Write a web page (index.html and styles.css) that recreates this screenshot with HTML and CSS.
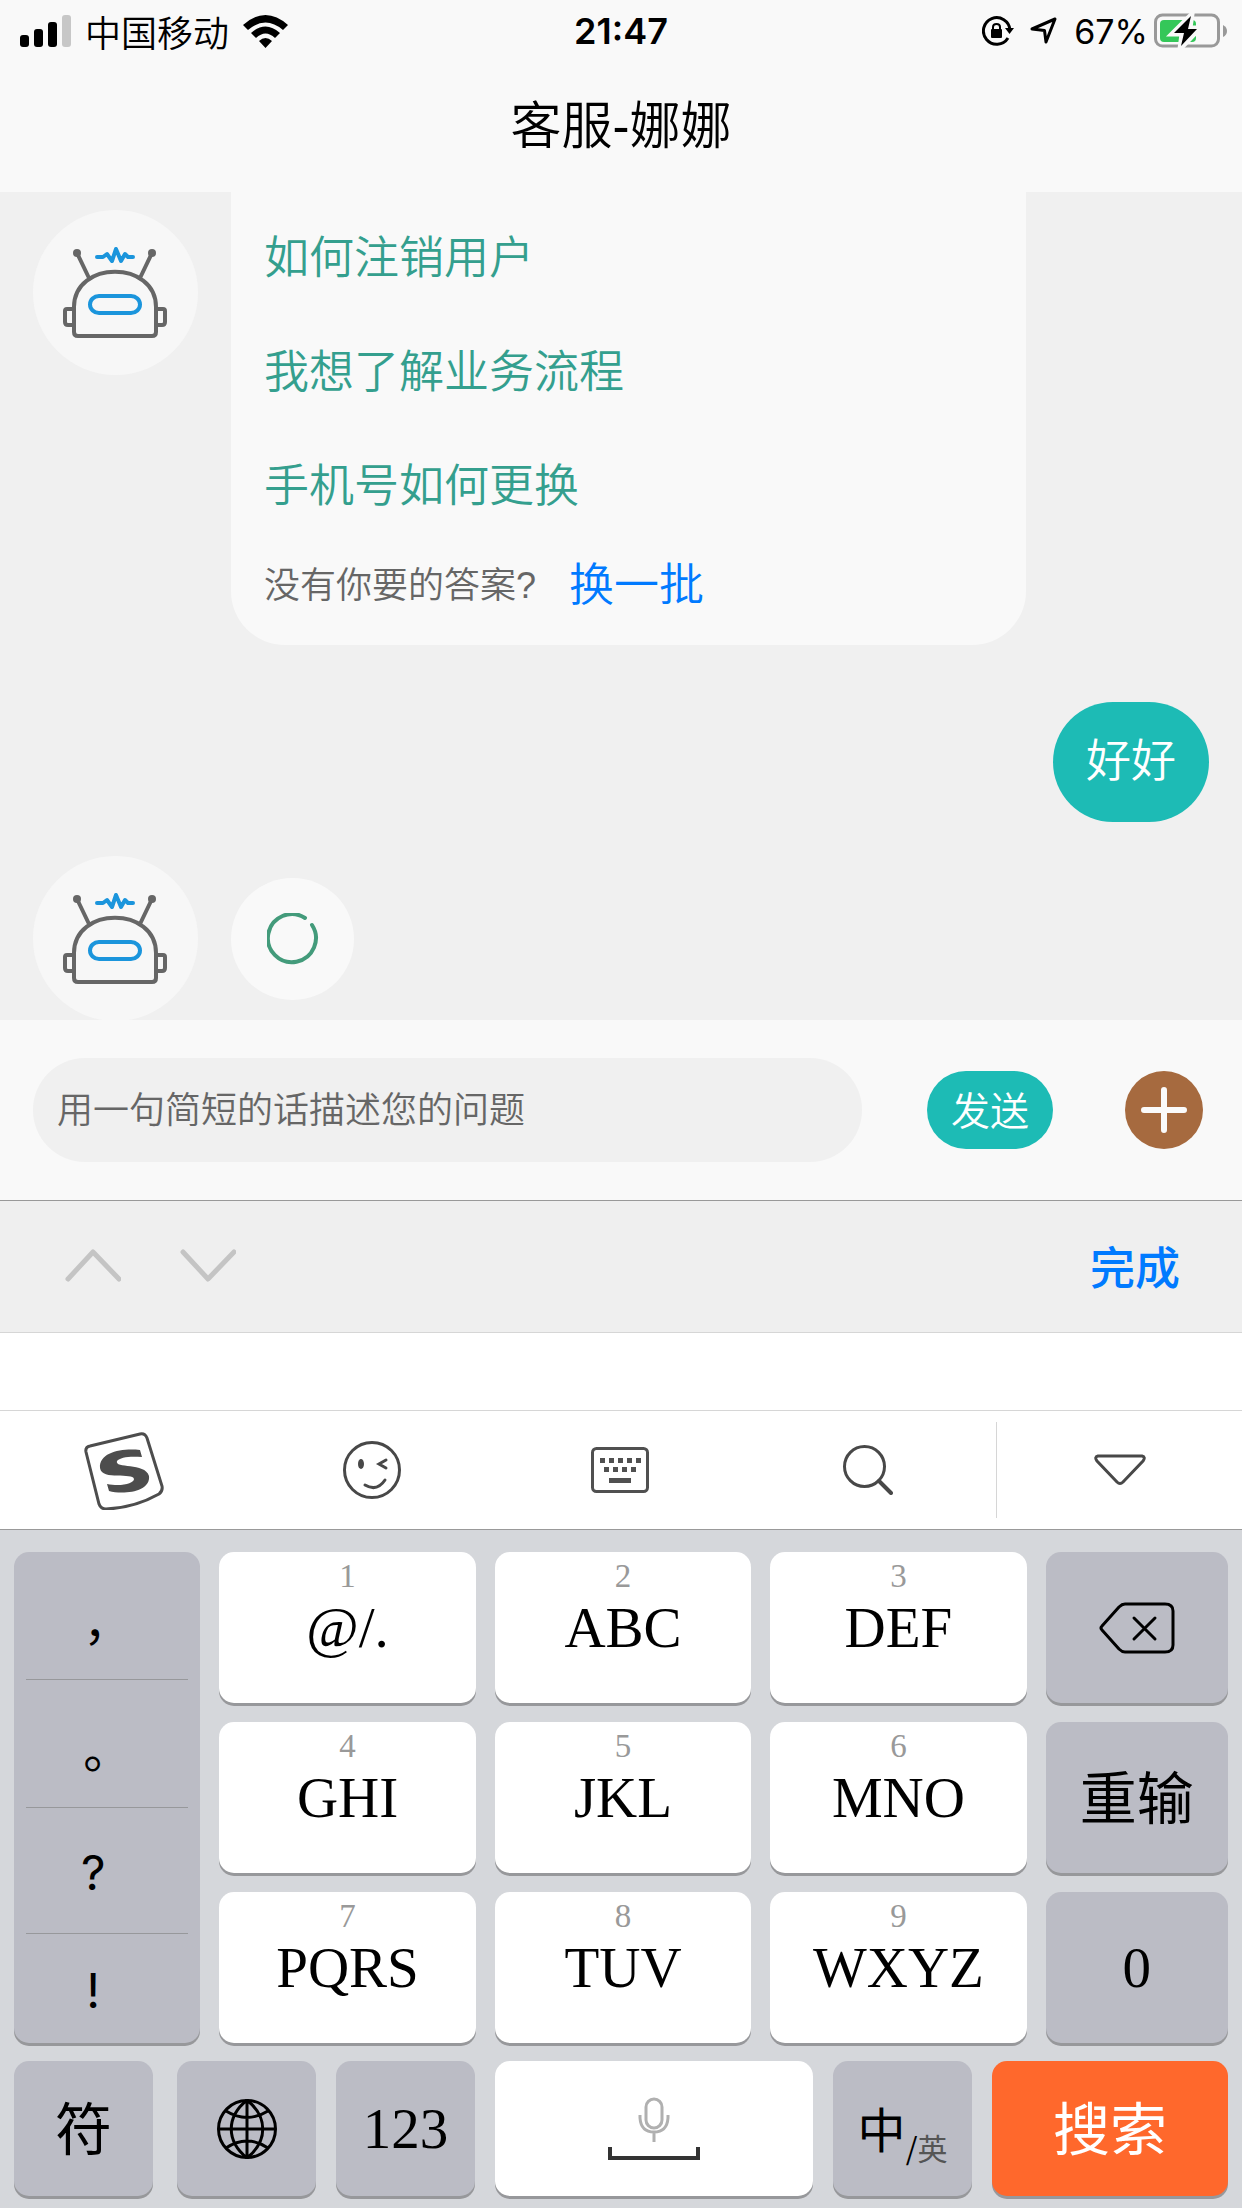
FILE: index.html
```html
<!DOCTYPE html>
<html lang="zh-CN">
<head>
<meta charset="utf-8">
<meta name="viewport" content="width=device-width, initial-scale=1">
<title>客服-娜娜</title>
<link rel="stylesheet" href="styles.css">
</head>
<body>
<svg class="sprite" aria-hidden="true">
  <symbol id="robot" viewBox="0 0 165 165">
    <g fill="none" stroke="#666" stroke-width="4" stroke-linejoin="round">
      <path d="M41 97 C41 50 123 50 123 97 V122 Q123 126 119 126 H45 Q41 126 41 122 Z"/>
      <path d="M41 99 H34 Q32 99 32 101 V112 Q32 115 35 115 H41 M123 99 H130 Q132 99 132 101 V112 Q132 115 129 115 H123"/>
      <path d="M44 43 L56 68 M119 43 L107 68"/>
    </g>
    <circle cx="44" cy="43" r="4" fill="#666"/><circle cx="119" cy="43" r="4" fill="#666"/>
    <rect x="57" y="86" width="50" height="17" rx="9" fill="none" stroke="#1b95dc" stroke-width="4"/>
    <path d="M64 47 H70 L74 44 L79 51 L83 39 L88 51 L92 44 L95 47 H100" fill="none" stroke="#1b95dc" stroke-width="4" stroke-linecap="round" stroke-linejoin="round"/>
  </symbol>
</svg>

<header class="top">
  <div class="status">
    <div class="status-left">
      <svg width="51" height="32" viewBox="0 0 51 32"><rect y="20" width="9" height="12" rx="3"/><rect x="14" y="14" width="9" height="18" rx="3"/><rect x="28" y="7" width="9" height="25" rx="3"/><rect x="42" width="9" height="32" rx="3" fill="#c7c7c7"/></svg>
      <span>中国移动</span>
      <svg width="45" height="33" viewBox="0 0 45 33"><path d="M0 10 Q22.500 -10 45 10 L40 15 Q22.500 0 5 15 Z M8 18 Q22.500 5 37 18 L32 23 Q22.500 14 13 23 Z M16 26 Q22.500 20 29 26 L22.500 33 Z"/></svg>
    </div>
    <time class="clock">21:47</time>
    <div class="status-right">
      <svg width="32" height="30" viewBox="0 0 32 30"><path d="M28 14 A13.300 13.300 0 1 0 26 22" fill="none" stroke="#000" stroke-width="3"/><path d="M23 12 H32 L27.500 18 Z"/><rect x="9" y="13" width="11" height="9" rx="1"/><path d="M11 14 V11 Q11 8 14.500 8 Q18 8 18 11 V14" fill="none" stroke="#000" stroke-width="2"/></svg>
      <svg width="28" height="28" viewBox="0 0 28 28"><path d="M2 12 L25 2 L16 25 L14.500 13.500 Z" fill="none" stroke="#000" stroke-width="3" stroke-linejoin="round"/></svg>
      <span>67%</span>
      <svg class="battery" width="74" height="36" viewBox="0 0 74 36"><rect x="1.500" y="2" width="63" height="31" rx="7" fill="none" stroke="#999" stroke-width="3"/><path d="M69 12 Q73 14 73 18 Q73 22 69 24 Z" fill="#999"/><rect x="6" y="7" width="36" height="22" rx="4" fill="#34c759"/><path d="M38 1 L18 21 H28 L26 36 L46 15 H36 L38 1 Z" stroke="#f9f9f9" stroke-width="5"/><path d="M37 3 L20 20 H30 L27 33 L43 16 H34 Z"/></svg>
    </div>
  </div>
  <h1>客服-娜娜</h1>
</header>

<main class="chat">
  <section class="msg msg-first">
    <svg class="avatar"><use href="#robot"/></svg>
    <div class="bubble faq">
      <a href="#cancel">如何注销用户</a>
      <a href="#process">我想了解业务流程</a>
      <a href="#phone">手机号如何更换</a>
      <p>没有你要的答案? <a class="swap" href="#more">换一批</a></p>
    </div>
  </section>
  <section class="msg mine"><p class="bubble reply">好好</p></section>
  <section class="msg waiting">
    <svg class="avatar"><use href="#robot"/></svg>
    <div class="bubble loading"><svg width="52" height="52" viewBox="0 0 52 52"><path d="M38 5 A24 24 0 1 0 45 12" fill="none" stroke="#439b7b" stroke-width="4" stroke-linecap="round"/></svg></div>
  </section>
</main>

<form class="composer">
  <input type="text" aria-label="问题" placeholder="用一句简短的话描述您的问题">
  <button type="button" class="send">发送</button>
  <button type="button" class="plus" aria-label="更多"><svg width="46" height="46" viewBox="0 0 46 46"><path d="M23 3 V43 M3 23 H43" stroke="#fafafa" stroke-width="6" stroke-linecap="round"/></svg></button>
</form>

<div class="accessory">
  <button type="button" aria-label="上一个"><svg width="56" height="34" viewBox="0 0 56 34"><path d="M3 31 L28 4 L54 31" fill="none" stroke="#c4c4c4" stroke-width="5" stroke-linecap="round" stroke-linejoin="round"/></svg></button>
  <button type="button" aria-label="下一个"><svg width="56" height="34" viewBox="0 0 56 34"><path d="M3 4 L28 31 L54 4" fill="none" stroke="#c4c4c4" stroke-width="5" stroke-linecap="round" stroke-linejoin="round"/></svg></button>
  <button type="button" class="done">完成</button>
</div>
<div class="candidates"></div>

<nav class="tools">
  <button type="button" aria-label="搜狗"><svg width="80" height="80" viewBox="0 0 80 80"><path d="M6 16 L56 4 Q61 3 63 8 L78 56 Q79 61 75 64 Q50 78 22 79 Q17 79 15 74 L2 22 Q1 17 6 16 Z" fill="none" stroke="#4d4d4d" stroke-width="3"/><path d="M56 20 L58 27 C46 26 36 27 33 31 C30 39 61 32 65 46 C67 62 39 65 25 61 L23 54 C38 57 50 53 50 49 C49 42 18 51 16 38 C15 22 38 18 56 20 Z" fill="#4d4d4d"/></svg></button>
  <button type="button" aria-label="表情"><svg width="58" height="58" viewBox="0 0 58 58"><g fill="none" stroke="#484848" stroke-width="3" stroke-linecap="round"><circle cx="29" cy="29" r="27.500"/><path d="M43 19 L36 23 L43 27 M22 44 Q34 51 42 39"/></g><ellipse cx="18" cy="23" rx="3" ry="5" fill="#484848"/></svg></button>
  <button type="button" aria-label="键盘"><svg width="58" height="46" viewBox="0 0 58 46"><rect x="1.500" y="1.500" width="55" height="43" rx="4" fill="none" stroke="#505050" stroke-width="3"/><path d="M9 13.500 H52" stroke="#505050" stroke-width="5" stroke-dasharray="5 4"/><path d="M13 22.500 H46" stroke="#505050" stroke-width="5" stroke-dasharray="5 4"/><path d="M18 33.500 H40" stroke="#505050" stroke-width="5"/></svg></button>
  <button type="button" aria-label="搜索"><svg width="50" height="50" viewBox="0 0 50 50"><g fill="none" stroke="#484848"><circle cx="21.500" cy="21.500" r="20" stroke-width="3"/><path d="M36 36 L48 48" stroke-width="4" stroke-linecap="round"/></g></svg></button>
  <button type="button" class="collapse" aria-label="收起"><svg width="52" height="32" viewBox="0 0 52 32"><path d="M4 2 H48 Q52 3 49 7 L29 28 Q26 31 23 28 L3 7 Q0 3 4 2 Z" fill="none" stroke="#484848" stroke-width="3"/></svg></button>
</nav>

<section class="keyboard">
  <div class="keys">
    <div class="key gray marks"><button type="button" class="full">，</button><button type="button" class="full">。</button><button type="button">?</button><button type="button" class="last">!</button></div>
    <button type="button" class="key"><small>1</small>@/.</button>
    <button type="button" class="key"><small>2</small>ABC</button>
    <button type="button" class="key"><small>3</small>DEF</button>
    <button type="button" class="key gray" aria-label="删除"><svg width="76" height="52" viewBox="0 0 76 52"><g fill="none" stroke="#000" stroke-width="3" stroke-linejoin="round" stroke-linecap="round"><path d="M26 2 H66 Q74 2 74 9 V43 Q74 50 66 50 H26 Q23 50 20 47 L3 28 Q1 26 3 24 L20 5 Q23 2 26 2 Z"/><path d="M35 16 L56 37 M56 16 L35 37"/></g></svg></button>
    <button type="button" class="key"><small>4</small>GHI</button>
    <button type="button" class="key"><small>5</small>JKL</button>
    <button type="button" class="key"><small>6</small>MNO</button>
    <button type="button" class="key gray han">重输</button>
    <button type="button" class="key"><small>7</small>PQRS</button>
    <button type="button" class="key"><small>8</small>TUV</button>
    <button type="button" class="key"><small>9</small>WXYZ</button>
    <button type="button" class="key gray">0</button>
  </div>
  <div class="bottom-row">
    <button type="button" class="key gray han symbols">符</button>
    <button type="button" class="key gray" aria-label="切换键盘"><svg width="60" height="60" viewBox="0 0 60 60"><g fill="none" stroke="#000" stroke-width="3"><circle cx="30" cy="30" r="28.500"/><path d="M30 1 V59 M1 30 H59 M30 1 C9 18 9 42 30 59 M30 1 C51 18 51 42 30 59 M9 12 Q30 25 51 12 M9 49 Q30 35 51 49"/></g></svg></button>
    <button type="button" class="key gray">123</button>
    <button type="button" class="key" aria-label="空格"><svg width="92" height="64" viewBox="0 0 92 64"><g fill="none"><rect x="38" y="2" width="16" height="29" rx="8" stroke="#b0b0b0" stroke-width="3"/><path d="M32 18 V21 Q33 35 46 35 Q59 35 60 21 V18 M46 35 V45" stroke="#b0b0b0" stroke-width="3"/><path d="M2 50 V61 H90 V50" stroke="#333" stroke-width="4"/></g></svg></button>
    <button type="button" class="key gray lang"><span>中</span><span class="slash">/</span><span class="en">英</span></button>
    <button type="button" class="key han go">搜索</button>
  </div>
</section>
</body>
</html>
```

FILE: styles.css
```css
* { box-sizing: border-box; }
body {
  margin: 0;
  background: #fff;
  color: #000;
  font-family: "Liberation Sans", "Noto Sans CJK SC", sans-serif;
  font-size: 36px;
}
button, input { font: inherit; color: inherit; border: 0; margin: 0; padding: 0; background: none; }
button { display: flex; align-items: center; justify-content: center; }
svg { display: block; flex: none; }
a { text-decoration: none; }
h1, p { margin: 0; }
.sprite { position: absolute; width: 0; height: 0; }

.top { height: 192px; background: #f9f9f9; }
.status {
  display: grid;
  grid-template-columns: 1fr auto 1fr;
  align-items: center;
  height: 62px;
  padding: 0 20px;
}
.status-left, .status-right { display: flex; align-items: center; gap: 14px; font-family: Inter, "Noto Sans CJK SC", sans-serif; font-weight: 350; }
.status-right { justify-content: flex-end; font-size: 34px; font-weight: 400; gap: 16px; }
.battery { margin: 0 -6px 0 -10px; }
.clock { font-family: Inter, sans-serif; font-weight: 600; }
h1 { font-size: 51px; line-height: 74px; padding-top: 28px; text-align: center; font-weight: 350; }

.chat { height: 828px; overflow: hidden; background: #f0f0f0; }
.msg { display: flex; align-items: flex-start; gap: 33px; padding: 0 33px; }
.avatar { width: 165px; height: 165px; border-radius: 50%; background: #f7f7f7; }
.msg-first .avatar { margin-top: 18px; }
.bubble { border-radius: 60px; background: #f9f9f9; font-weight: 350; }
.faq {
  display: flex;
  flex-direction: column;
  flex: 0 1 795px;
  padding: 34px 33px 26px;
  border-radius: 0 0 54px 54px;
}
.faq a { color: #349f8e; font-size: 45px; line-height: 66px; margin-bottom: 48px; }
.faq p { display: flex; align-items: center; gap: 33px; color: #666; line-height: 66px; margin-top: -15px; }
.faq p a { color: #007aff; margin: 0; }
.mine { justify-content: flex-end; padding-top: 57px; }
.reply { padding: 26px 33px; font-size: 45px; line-height: 68px; color: #fff; background: #1dbbb5; }
.waiting { align-items: center; padding-top: 34px; }
.loading { display: grid; place-items: center; width: 123px; height: 122px; border-radius: 61px; }

.composer { display: flex; align-items: center; height: 180px; padding: 0 39px 0 33px; background: #f9f9f9; }
.composer input { flex: 1; min-width: 0; height: 104px; padding: 2px 24px 0; border-radius: 52px; background: #f0f0f0; font-weight: 350; }
.composer input::placeholder { color: #666; opacity: 1; }
.send { width: 126px; height: 78px; margin: 0 72px 0 65px; padding-bottom: 4px; border-radius: 39px; background: #1dbbb5; color: #fff; font-size: 39px; font-weight: 350; }
.plus { width: 78px; height: 78px; border-radius: 50%; background: #a66a3f; }

.accessory { display: flex; align-items: center; gap: 59px; height: 133px; padding: 0 62px 3px 65px; border-top: 1px solid #999; border-bottom: 1px solid #d6d6d6; background: #efefef; }
.done { margin-left: auto; color: #007aff; font-size: 45px; font-weight: 500; }
.candidates { height: 77px; }
.tools { display: grid; grid-template-columns: repeat(4, 248fr) 250fr; height: 120px; border-top: 1px solid #d6d6d6; border-bottom: 1px solid #999; }
.collapse { margin: 11px 0 11px 4px; border-left: 1px solid #d6d6d6; }

.keyboard { display: grid; gap: 18px; padding: 22px 14px 12px; background: #d5d7db; }
.keys { display: grid; grid-template-columns: 186fr 256fr 256fr 256fr 182fr; grid-auto-rows: 151px; gap: 19px; }
.bottom-row { display: grid; grid-template-columns: 143fr 139fr 139fr 318fr 139fr 236fr; grid-auto-rows: 135px; gap: 20px; }
.key {
  min-width: 0;
  border-radius: 15px;
  background: #fff;
  box-shadow: 0 3px #97989b;
  font-family: "Liberation Serif", "Noto Sans CJK SC", serif;
  font-size: 57px;
  line-height: 60px;
}
.keys > .key { flex-direction: column; }
.key small { margin: -41px 0 3px; color: #999; font-size: 33px; line-height: 38px; }
.key.gray { background: #bbbcc5; }
.key.han { padding-bottom: 8px; font-family: "Noto Sans CJK SC", sans-serif; }
.key.go { background: #ff682c; color: #fff; }
.symbols { margin-right: 4px; }
.marks { grid-row: span 3; display: flex; padding: 0 12px; }
.marks button { flex: 127 1 0; width: 100%; padding: 4px 28px 0 0; font-family: Inter, sans-serif; font-size: 48px; }
.marks .full { padding: 6px 0 0; font-family: "Noto Sans CJK SC", sans-serif; }
.marks .last { flex-grow: 110; }
.marks button + button { border-top: 1px solid #97989b; }
.lang { align-items: center; padding-bottom: 4px; font-family: "Noto Sans CJK SC", sans-serif; font-size: 48px; }
.lang .slash, .lang .en { padding-top: 40px; font-size: 30px; }
.lang .en { color: #555; }
```
